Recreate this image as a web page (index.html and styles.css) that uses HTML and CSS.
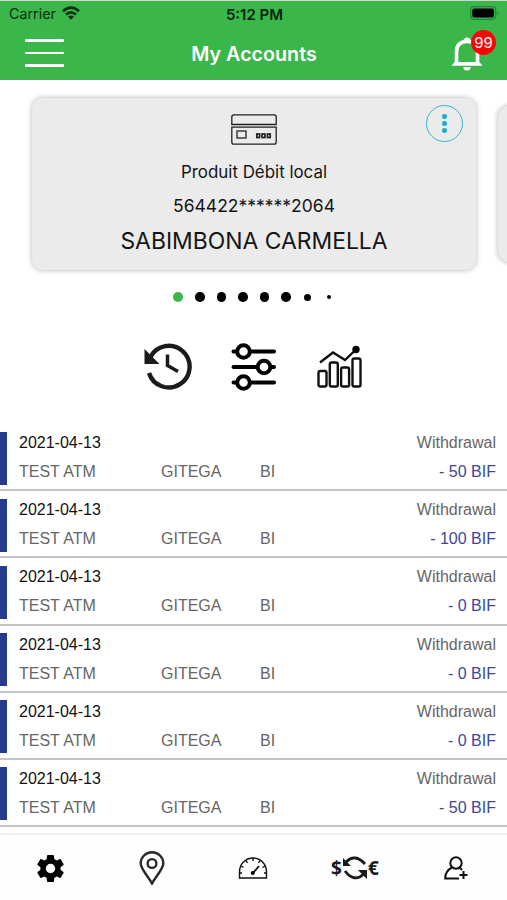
FILE: index.html
```html
<!DOCTYPE html>
<html lang="en">
<head>
<meta charset="utf-8">
<title>My Accounts</title>
<link rel="stylesheet" href="styles.css">
</head>
<body>
<div class="app">
  <header class="header">
    <div class="status">
      <div class="carrier"><span class="carrier-name">Carrier</span>
        <svg class="wifi" viewBox="0 0 18 14"><g fill="none" stroke="#07300d" stroke-width="2.7"><path d="M1 5.2Q9-2 17 5.2"/><path d="M4 8.6Q9 4.2 14 8.6"/></g><path d="M6 10.8Q9 8.3 12 10.8L9 13.8Z" fill="#07300d"/></svg>
      </div>
      <span class="time">5:12 PM</span>
      <svg class="battery" viewBox="0 0 30 14"><rect x=".7" y=".7" width="25" height="12.6" rx="3.5" fill="none" stroke="#23823a" stroke-width="1.2"/><rect x="2.3" y="2.5" width="21.7" height="9" rx="2"/><path d="M27.3 5Q30 7 27.3 9Z" fill="#23823a"/></svg>
    </div>
    <div class="titlebar">
      <div class="menu"><i></i><i></i><i></i></div>
      <h1>My Accounts</h1>
      <div class="bell">
        <svg viewBox="0 0 32 34"><path d="M5.5 27V15C5.500 8 9 4.500 16 4.500S26.500 8 26.500 15V27" fill="none" stroke="#fff" stroke-width="3.6"/><path d="M.5 28.800Q1 27.500 4 25H28Q31 27.500 31.500 28.800ZM12.300 30H19.700Q19.500 33.500 16 33.500T12.300 30ZM12.300 4.500Q12.500.5 16 .5T19.700 4.500Z" fill="#fff"/></svg>
        <span class="badge">99</span>
      </div>
    </div>
  </header>
  <section class="carousel">
    <article class="card">
      <svg class="card-icon" viewBox="0 0 46 31"><g fill="none" stroke="#222" stroke-width="1.3"><path d="M.8 10.5V3Q.8.8 3 .8H43Q45.2.8 45.2 3V10.5Z"/><path d="M.8 13.2H45.2V28Q45.2 30.2 43 30.2H3Q.8 30.2.8 28Z"/><rect x="6" y="17" width="9" height="7"/></g><g fill="none" stroke="#222" stroke-width="1.7"><rect x="25.8" y="20" width="2.8" height="3.5"/><rect x="31.1" y="20" width="2.8" height="3.5"/><rect x="36.4" y="20" width="2.8" height="3.5"/></g></svg>
      <p class="product">Produit Débit local</p>
      <p class="number">564422******2064</p>
      <p class="holder">SABIMBONA CARMELLA</p>
      <button class="more" aria-label="More"><i></i><i></i><i></i></button>
    </article>
    <div class="next-card"></div>
  </section>
  <div class="dots"><i class="active"></i><i></i><i></i><i></i><i></i><i></i><i class="small"></i><i class="tiny"></i></div>
  <nav class="actions">
    <svg viewBox="0 0 48 48"><path d="M6.4 14A20.8 20.8 0 1 1 5 30" fill="none" stroke="#1b1b1b" stroke-width="4.4"/><path d="M.5 6V21H15.500Z" fill="#1b1b1b"/><path d="M23.5 11.500V22.500L34 28.500" fill="none" stroke="#1b1b1b" stroke-width="3.5"/></svg>
    <svg viewBox="0 0 48 48"><g fill="#fff" stroke="#000" stroke-width="4" stroke-linecap="round"><path d="M3.5 8.5H44M3.5 24H44M3.5 39.5H44"/><circle cx="13.500" cy="8.5" r="6.3"/><circle cx="34" cy="24" r="6.3"/><circle cx="13.500" cy="39.5" r="6.3"/></g></svg>
    <svg viewBox="0 0 48 48"><g fill="none" stroke="#111" stroke-width="2.400"><rect x="2.500" y="28" width="8" height="15.5" rx="1.8"/><rect x="13.800" y="19.5" width="8" height="24" rx="1.8"/><rect x="25.1" y="24.5" width="8" height="19" rx="1.8"/><rect x="36.500" y="15.5" width="8" height="28" rx="1.8"/><path d="M4 19.5L17 9.500L29 17L40 6.5"/></g><circle cx="40" cy="6.5" r="3.700"/></svg>
  </nav>
  <main class="list">
    <div class="row"><span class="date">2021-04-13</span><span class="kind">Withdrawal</span><span class="place">TEST ATM</span><span>GITEGA</span><span>BI</span><span class="amount">- 50 BIF</span></div>
    <div class="row"><span class="date">2021-04-13</span><span class="kind">Withdrawal</span><span class="place">TEST ATM</span><span>GITEGA</span><span>BI</span><span class="amount">- 100 BIF</span></div>
    <div class="row"><span class="date">2021-04-13</span><span class="kind">Withdrawal</span><span class="place">TEST ATM</span><span>GITEGA</span><span>BI</span><span class="amount">- 0 BIF</span></div>
    <div class="row"><span class="date">2021-04-13</span><span class="kind">Withdrawal</span><span class="place">TEST ATM</span><span>GITEGA</span><span>BI</span><span class="amount">- 0 BIF</span></div>
    <div class="row"><span class="date">2021-04-13</span><span class="kind">Withdrawal</span><span class="place">TEST ATM</span><span>GITEGA</span><span>BI</span><span class="amount">- 0 BIF</span></div>
    <div class="row"><span class="date">2021-04-13</span><span class="kind">Withdrawal</span><span class="place">TEST ATM</span><span>GITEGA</span><span>BI</span><span class="amount">- 50 BIF</span></div>
  </main>
  <nav class="tabs">
    <div><svg class="gear" viewBox="2 2 20 20"><path d="M19.43 12.98c.04-.32.07-.64.07-.98s-.03-.66-.07-.98l2.11-1.65c.19-.15.24-.42.12-.64l-2-3.46c-.12-.22-.39-.3-.61-.22l-2.49 1c-.52-.4-1.08-.73-1.69-.98l-.38-2.65C14.46 2.18 14.25 2 14 2h-4c-.25 0-.46.18-.49.42l-.38 2.65c-.61.25-1.17.59-1.69.98l-2.49-1c-.23-.09-.49 0-.61.22l-2 3.46c-.13.22-.07.49.12.64l2.11 1.65c-.04.32-.07.65-.07.98s.03.66.07.98l-2.11 1.65c-.19.15-.24.42-.12.64l2 3.46c.12.22.39.3.61.22l2.49-1c.52.4 1.08.73 1.69.98l.38 2.65c.03.24.24.42.49.42h4c.25 0 .46-.18.49-.42l.38-2.65c.61-.25 1.17-.59 1.69-.98l2.49 1c.23.09.49 0 .61-.22l2-3.46c.12-.22.07-.49-.12-.64zM12 15.5A3.5 3.5 0 1 1 12 8.500a3.5 3.5 0 0 1 0 7z"/></svg></div>
    <div><svg class="pin" viewBox="0 0 26 34"><g fill="none" stroke="#292929" stroke-width="2.4"><path d="M13 32.5C10 26.500 1.700 18 1.700 12.500A11.300 11.300 0 0 1 24.300 12.500C24.300 18 16 26.500 13 32.500Z"/><circle cx="13" cy="12.500" r="4.400"/></g></svg></div>
    <div><svg class="gauge" viewBox="0 0 30 24"><g fill="none" stroke="#111" stroke-width="1.400"><path d="M1.500 22V16A13.500 14 0 0 1 28.500 16V22Z"/><path d="M1 17H4M29 17H26M3 10L5.500 11.500M8 4.500L9.500 7M15 2V5M22 4.500L20.500 7M27 10L24.500 11.500"/><path d="M15 17L21 10" stroke-width="1.800"/></g><circle cx="14.700" cy="17" r="2"/></svg></div>
    <div class="currency"><b>$</b><svg viewBox="0 0 26 26"><g fill="none" stroke="#1a1a1a" stroke-width="2.800"><path d="M4 7Q13-2 23 9"/><path d="M22 19Q12 28 3 16"/></g><path d="M1 3V11H9ZM25 15V24L16 15Z" fill="#1a1a1a"/></svg><b>€</b></div>
    <div><svg class="user" viewBox="0 0 24 25"><g fill="none" stroke="#111" stroke-width="2"><circle cx="12" cy="7" r="5.700"/><path d="M8 11.500Q1.200 15 1.200 22.500H15M15.500 11.500L18 14M19.500 15V23M15.500 19H23.500"/></g></svg></div>
  </nav>
</div>
</body>
</html>
```

FILE: styles.css
```css
* { box-sizing: border-box; }
body { margin: 0; background: #fff; font-family: Inter, sans-serif; }
.app { width: 507px; height: 900px; overflow: hidden; display: flex; flex-direction: column; }
svg { display: block; }
.header { height: 80px; background: #3bb64a; border-top: 1px solid #c6dec9; flex: none; }
.status { height: 26px; display: grid; grid-template-columns: 1fr auto 1fr; align-items: center; padding: 0 7px 0 9px; font-size: 14.300px; color: #07300d; }
.carrier { display: flex; align-items: center; gap: 6px; margin-top: -2px; }
.wifi { width: 18px; height: 14px; }
.time { font-weight: 600; color: #052409; font-size: 15px; }
.battery { width: 30px; height: 14px; justify-self: end; margin-top: -2px; }
.titlebar { height: 53px; display: grid; grid-template-columns: 1fr auto 1fr; align-items: center; padding: 0 24px 0 25px; }
.menu { width: 39px; display: flex; flex-direction: column; gap: 10px; margin-top: -1px; }
.menu i { height: 2.400px; background: #fff; border-radius: 1px; }
h1 { margin: 0; font-size: 19.700px; font-weight: 600; color: #fff; }
.bell { width: 32px; height: 34px; justify-self: end; position: relative; }
.bell svg { width: 32px; height: 34px; }
.badge { position: absolute; left: 20px; top: -7px; width: 25px; height: 25px; border-radius: 50%; background: #fa0505; color: #fff; font-size: 15px; line-height: 25px; text-align: center; }
.carousel { display: flex; align-items: center; gap: 20px; padding: 17px 0 0 31px; flex: none; }
.card { position: relative; flex: none; width: 446px; height: 174px; border-radius: 12px; background: #ebebeb; border: 1px solid #dedfdf; box-shadow: 0 0 5px #c9cccc; display: flex; flex-direction: column; align-items: center; padding-top: 16px; color: #151515; }
.card p { margin: 0; white-space: nowrap; }
.card-icon { width: 46px; height: 31px; }
.card .product { font-size: 16.900px; line-height: 22px; margin-top: 16px; }
.card .number { font-size: 17.500px; line-height: 24px; margin-top: 11px; }
.card .holder { font-size: 22.900px; line-height: 30px; margin-top: 8px; }
.more { position: absolute; right: 13px; top: 7px; width: 37px; height: 37px; border: 1.500px solid #35b5d0; border-radius: 50%; background: none; padding: 0; display: flex; flex-direction: column; align-items: center; justify-content: center; gap: 2.500px; }
.more i { width: 4.500px; height: 4.500px; border-radius: 50%; background: #25acc8; }
.next-card { flex: none; width: 40px; height: 158px; border-radius: 12px; background: #ebebeb; border: 1px solid #dedfdf; box-shadow: 0 0 5px #c9cccc; }
.dots { display: flex; align-items: center; justify-content: center; gap: 12px; height: 20px; margin-top: 16px; flex: none; }
.dots i { width: 9.600px; height: 9.600px; border-radius: 50%; background: #000; }
.dots .active { background: #3bb64a; }
.dots .small { width: 7px; height: 7px; margin: 0 1.200px; }
.dots .tiny { width: 4px; height: 4px; margin: 0 2.700px; }
.actions { display: flex; justify-content: center; gap: 38px; margin-top: 36px; flex: none; }
.actions svg { width: 48px; height: 48px; }
.list { margin-top: 33px; flex: none; }
.row { height: 67.200px; display: grid; grid-template-columns: 142px 99px 60px 1fr; grid-template-rows: 29px 29px; align-items: center; padding: 2px 11px 0 19px; border-bottom: 2px solid #c4c4c4; position: relative; font-family: "Liberation Sans", sans-serif; font-size: 16px; color: #666; align-content: center; white-space: nowrap; }
.row::before { content: ""; position: absolute; left: 0; top: 7.500px; width: 7px; height: 53px; background: #263b8e; }
.row .date { color: #111; }
.kind { grid-column: 2 / 5; text-align: right; }
.amount { text-align: right; color: #3c479b; }
.tabs { flex: none; margin-top: 6px; height: 68px; border-top: 2px solid #eee; background: #fdfdfd; display: grid; grid-template-columns: repeat(5, 1fr); align-items: center; justify-items: center; }
.gear { width: 27px; height: 27px; }
.pin { width: 26px; height: 34px; }
.gauge { width: 30px; height: 24px; }
.currency { display: flex; align-items: center; font-family: "Open Sans", sans-serif; font-size: 19px; color: #1a1a1a; }
.currency svg { width: 26px; height: 26px; }
.user { width: 24px; height: 25px; }
```
